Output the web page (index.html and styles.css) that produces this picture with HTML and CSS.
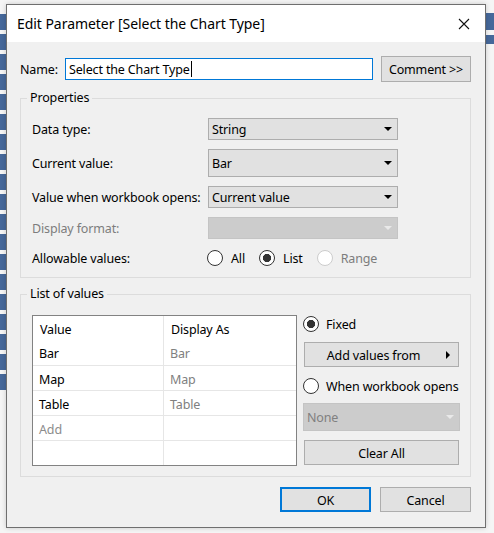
FILE: index.html
```html
<!DOCTYPE html>
<html>
<head>
<meta charset="utf-8">
<title>Edit Parameter</title>
<link rel="stylesheet" href="styles.css">
</head>
<body>
<div class="window">
  <div class="titlebar">
    <span class="title">Edit Parameter [Select the Chart Type]</span>
    <svg class="close" width="12" height="12" viewBox="0 0 12 12"><path d="M1 1L11 11M11 1L1 11" stroke="#111" stroke-width="1.1" fill="none"/></svg>
  </div>
  <div class="content">
    <div class="name-row">
      <span class="name-label">Name:</span>
      <div class="input"><span>Select the Chart Type</span><span class="caret"></span></div>
      <div class="btn comment">Comment &gt;&gt;</div>
    </div>

    <div class="group props">
      <div class="legend">Properties</div>
      <div class="prop-row r1"><span class="lbl">Data type:</span><div class="select h22"><span>String</span><i class="arrow"></i></div></div>
      <div class="prop-row r2"><span class="lbl">Current value:</span><div class="select h28"><span>Bar</span><i class="arrow"></i></div></div>
      <div class="prop-row r3"><span class="lbl">Value when workbook opens:</span><div class="select h22"><span>Current value</span><i class="arrow"></i></div></div>
      <div class="prop-row r4"><span class="lbl disabled">Display format:</span><div class="select h22 off"><span></span><i class="arrow"></i></div></div>
      <div class="prop-row r5"><span class="lbl">Allowable values:</span>
        <div class="radios">
          <span class="radio"></span><span class="rtext">All</span>
          <span class="radio on"></span><span class="rtext">List</span>
          <span class="radio dis"></span><span class="rtext disabled">Range</span>
        </div>
      </div>
    </div>

    <div class="group list">
      <div class="legend">List of values</div>
      <div class="list-body">
        <div class="table">
          <div class="cell head c1">Value</div><div class="cell head c2">Display As</div>
          <div class="cell c1">Bar</div><div class="cell c2 gray">Bar</div>
          <div class="cell c1">Map</div><div class="cell c2 gray">Map</div>
          <div class="cell c1">Table</div><div class="cell c2 gray">Table</div>
          <div class="cell c1 add">Add</div><div class="cell c2"></div>
          <div class="cell c1 last"></div><div class="cell c2 last"></div>
        </div>
        <div class="side">
          <div class="rrow fixed"><span class="radio on"></span><span class="rtext">Fixed</span></div>
          <div class="btn addfrom"><span class="btxt">Add values from</span><i class="rarrow"></i></div>
          <div class="rrow wwo"><span class="radio"></span><span class="rtext">When workbook opens</span></div>
          <div class="select h28 off none"><span>None</span><i class="arrow"></i></div>
          <div class="btn clear">Clear All</div>
        </div>
      </div>
    </div>

    <div class="footer">
      <div class="btn ok">OK</div>
      <div class="btn cancel">Cancel</div>
    </div>
  </div>
</div>
</body>
</html>
```

FILE: styles.css
```css
* { box-sizing: border-box; }
html, body { margin: 0; }
body {
  width: 494px;
  height: 533px;
  overflow: hidden;
  padding: 4px 0 0 6px;
  background-color: #f5f5f5;
  background-image:
    repeating-linear-gradient(to bottom, #46689a 0 16px, #f5f5f5 16px 20px),
    linear-gradient(to bottom, #46689a 0 17px, transparent 17px 22px, #46689a 22px 31px, transparent 31px);
  background-size: 6px 376px, 8px 32px;
  background-position: 0 14px, 486px 13px;
  background-repeat: no-repeat;
  font-family: "Noto Sans", "DejaVu Sans", sans-serif;
  font-size: 12.5px;
  letter-spacing: -0.15px;
  color: #000;
  white-space: nowrap;
}
.window {
  width: 480px;
  height: 524px;
  border: 1px solid #6f6f6f;
  background: #f0f0f0;
  box-shadow: 0 0 5px rgba(0,0,0,0.18);
  display: flex;
  flex-direction: column;
}
.titlebar {
  height: 37px;
  background: #fff;
  display: flex;
  align-items: center;
  justify-content: space-between;
  padding: 0 15px 0 10px;
  flex: none;
}
.title { font-size: 14px; letter-spacing: -0.05px; color: #000; }
.close { display: block; }

.content { padding: 14px 14px 0 13px; display: flex; flex-direction: column; }

.name-row { display: flex; align-items: center; height: 26px; }
.name-label { width: 45px; }
.input {
  flex: 1;
  height: 22px;
  border: 1px solid #0078d7;
  background: #fff;
  display: flex;
  align-items: center;
  padding-left: 3px;
  margin-right: 8px;
}
.caret { width: 1px; height: 16px; background: #000; margin-left: 1px; }
.btn {
  background: #e1e1e1;
  border: 1px solid #adadad;
  display: flex;
  align-items: center;
  justify-content: center;
  height: 26px;
  padding-top: 1px;
}
.comment { width: 90px; flex: none; }

.group { border: 1px solid #dcdcdc; padding: 0 11px; }
.legend {
  width: fit-content;
  height: 16px;
  line-height: 16px;
  margin: -9px 0 0 -5px;
  padding: 0 3px;
  background: #f0f0f0;
}
.props { margin-top: 16px; padding-bottom: 11px; }
.prop-row { display: flex; align-items: center; }
.lbl { width: 176px; flex: none; padding-top: 1px; }
.disabled { color: #7d7d7d; }
.r1 { margin-top: 12px; }
.r2, .r3, .r4 { margin-top: 9px; }
.r5 { margin-top: 11px; height: 16px; }

.select {
  width: 190px;
  flex: none;
  border: 1px solid #adadad;
  background: #e1e1e1;
  display: flex;
  align-items: center;
  padding-left: 3px;
}
.h22 { height: 22px; }
.h28 { height: 28px; }
.select.off { background: #cccccc; border-color: #c4c4c4; color: #808080; }
.arrow {
  margin-left: auto;
  margin-right: 5px;
  width: 0; height: 0;
  border-left: 4px solid transparent;
  border-right: 4px solid transparent;
  border-top: 4px solid #000;
}
.off .arrow { border-top-color: #e9e9e9; }

.radios { display: flex; align-items: center; margin-left: -1px; }
.radio {
  width: 16px; height: 16px;
  border-radius: 50%;
  border: 1px solid #333;
  background: #fff;
  flex: none;
}
.radio.on { background: radial-gradient(circle, #333 0 3.8px, #fff 4.4px); }
.radio.dis { border-color: #cccccc; }
.rtext { margin-left: 8px; margin-right: 14px; }

.list { margin-top: 16px; padding-bottom: 10px; }
.list-body { display: flex; margin-top: 13px; }
.table {
  width: 265px;
  flex: none;
  height: 151px;
  border: 1px solid #828282;
  background: #fff;
  display: grid;
  grid-template-columns: 131px 1fr;
  grid-template-rows: 24px 26px 25px 25px 25px 1fr;
}
.cell { display: flex; align-items: center; padding: 2px 0 0 6px; border-bottom: 1px solid #e6e6e6; }
.cell.c1 { border-right: 1px solid #e6e6e6; }
.cell.head { border-bottom: none; padding-left: 7px; }
.cell.last { border-bottom: none; }
.gray { color: #808080; }
.add { color: #8c8c8c; }

.side { width: 157px; flex: none; margin-left: 6px; display: flex; flex-direction: column; }
.rrow { display: flex; align-items: center; height: 16px; }
.rrow .rtext { margin-left: 7px; margin-right: 0; }
.fixed { margin-top: 1px; }
.addfrom { margin: 10px 1px 0; height: 25px; }
.btxt { flex: 1; text-align: center; }
.rarrow {
  width: 0; height: 0;
  border-top: 4px solid transparent;
  border-bottom: 4px solid transparent;
  border-left: 4px solid #000;
  margin: 0 8px 0 4px;
}
.wwo { margin-top: 11px; }
.none { width: 157px; margin-top: 9px; }
.clear { margin: 9px 1px 0; height: 25px; }

.footer { display: flex; justify-content: flex-end; gap: 9px; margin-top: 10px; }
.ok, .cancel { width: 91px; height: 25px; }
.ok { border: 2px solid #0078d7; }
```
